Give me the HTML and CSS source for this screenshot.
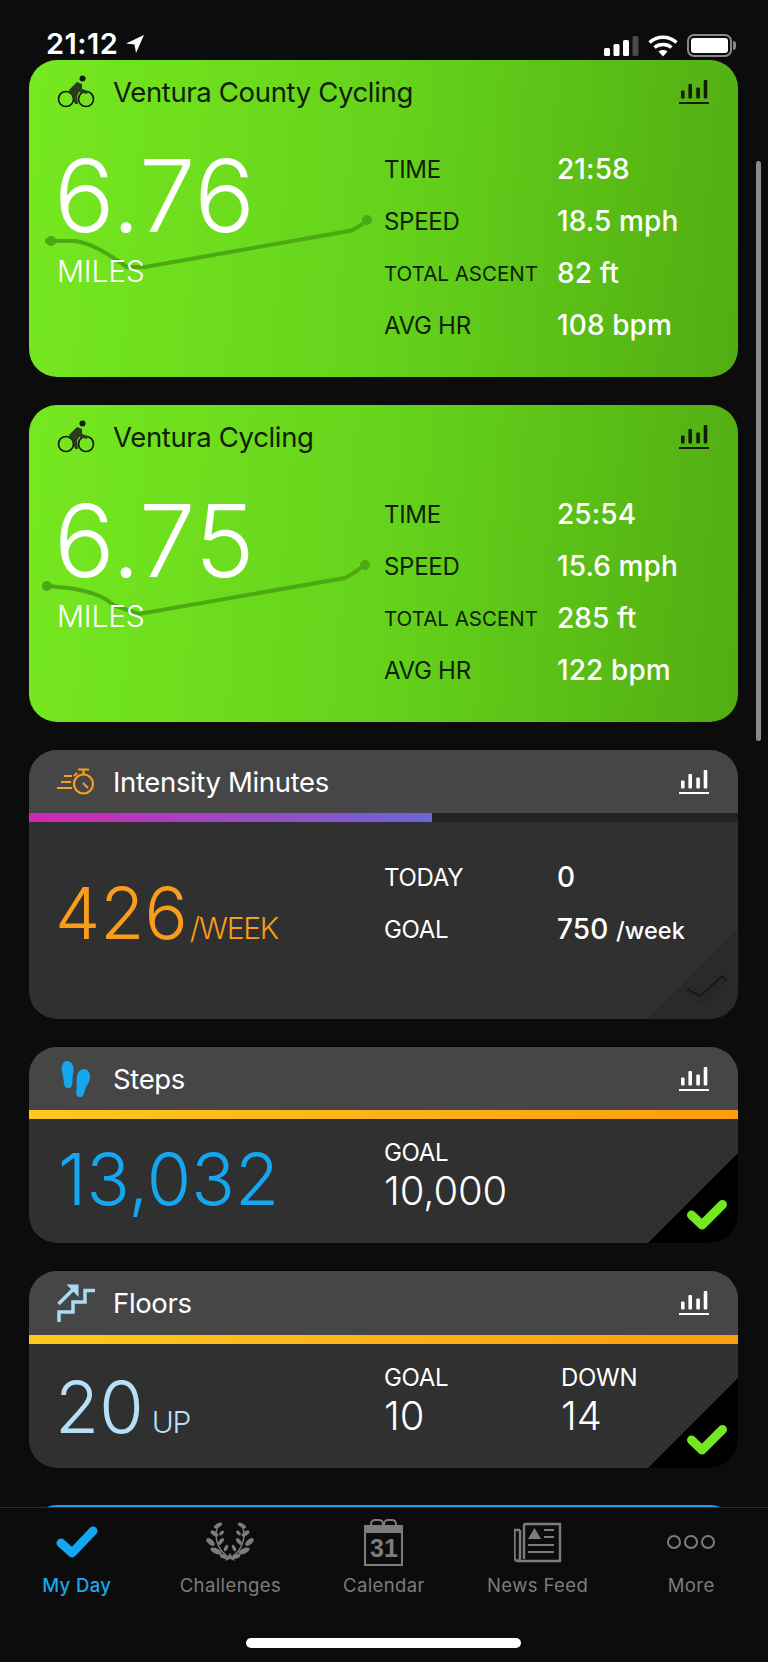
FILE: index.html
```html
<!DOCTYPE html>
<html>
    <head>
        <title>My Day</title>
        <link rel="stylesheet" href="styles.css">
    </head>
    <body>
        <!-- shared icons -->
        <svg class="icon-defs" width="0" height="0">
            <symbol id="icon-bike" viewBox="0 0 38 34">
                <circle cx="9" cy="24" r="7.500" fill="none" stroke="currentColor" stroke-width="1.700"/>
                <circle cx="29" cy="24" r="7.500" fill="none" stroke="currentColor" stroke-width="1.700"/>
                <circle cx="25.500" cy="3.500" r="3" fill="#0e1f05"/>
                <path d="M12 15 L20 7 L25 9 L25 14 L31 16 L30 19 L22 17 L20 21 L21 29 L18 29 L15 20 Z" fill="#2b3a1f"/>
            </symbol>
            <symbol id="icon-chart" viewBox="0 0 30 24">
                <rect x="2" y="10.500" width="3.600" height="8" rx="1"/>
                <rect x="9.400" y="4" width="3.600" height="14.500" rx="1"/>
                <rect x="17.300" y="7.500" width="3.600" height="11" rx="1"/>
                <rect x="24.700" y="0" width="3.600" height="18.500" rx="1"/>
                <rect x="0" y="22" width="30" height="2"/>
            </symbol>
            <symbol id="icon-check" viewBox="0 0 42 32">
                <path d="M5.500 16 L16 26 L36.500 5.500" fill="none" stroke="currentColor" stroke-width="9" stroke-linejoin="round" stroke-linecap="round"/>
            </symbol>
            <symbol id="icon-check-faint" viewBox="0 0 42 32">
                <path d="M5.500 16 L16 26 L36.500 5.500" fill="none" stroke="#272728" stroke-width="9" stroke-linejoin="round" stroke-linecap="round"/>
                <path d="M1 14 L14 21 L36 1 L41 6" fill="none" stroke="#151516" stroke-width="1.600"/>
            </symbol>
            <g id="laurel-half">
                <ellipse cx="12" cy="4.500" rx="4.500" ry="2" transform="rotate(-30 12 4.500)"/>
                <ellipse cx="8.500" cy="12.500" rx="4.500" ry="2.200" transform="rotate(35 8.500 12.500)"/>
                <ellipse cx="15.500" cy="12" rx="3" ry="1.600" transform="rotate(-45 15.500 12)"/>
                <ellipse cx="4.500" cy="21" rx="5" ry="2.600" transform="rotate(40 4.500 21)"/>
                <ellipse cx="15" cy="20.500" rx="4" ry="1.900" transform="rotate(-50 15 20.500)"/>
                <ellipse cx="10" cy="30" rx="6" ry="2.700" transform="rotate(25 10 30)"/>
                <ellipse cx="20" cy="27" rx="3.500" ry="1.700" transform="rotate(-65 20 27)"/>
                <ellipse cx="18" cy="35.500" rx="4.500" ry="2.200" transform="rotate(20 18 35.500)"/>
                <path d="M12 5 C8 14 10 27 21 35" fill="none" stroke="#7c7c7c" stroke-width="1.500"/>
            </g>
        </svg>

        <div class="screen">
            <!-- status bar -->
            <div class="status-bar">
                <div class="status-time">
                    <span>21:12</span>
                    <svg width="20" height="20" viewBox="0 0 20 20"><path d="M19 1 L1 9.500 L9.500 10.500 L11 19 Z" fill="#fff"/></svg>
                </div>
                <div class="status-icons">
                    <svg width="35" height="22" viewBox="0 0 35 22">
                        <rect x="0" y="13" width="6" height="8" rx="1.500" fill="#fff"/>
                        <rect x="9.500" y="9" width="6" height="12" rx="1.500" fill="#fff"/>
                        <rect x="19" y="5" width="6" height="16" rx="1.500" fill="#fff"/>
                        <rect x="28.500" y="1" width="6" height="20" rx="1.500" fill="#4a4a4a"/>
                    </svg>
                    <svg width="30" height="22" viewBox="0 0 30 22">
                        <path d="M1.500 7.500 C9 0.500 21 0.500 28.500 7.500" fill="none" stroke="#fff" stroke-width="3.400"/>
                        <path d="M6.500 12.500 C11 8.500 19 8.500 23.500 12.500" fill="none" stroke="#fff" stroke-width="3.400"/>
                        <path d="M10.500 16.500 C13 14.500 17 14.500 19.500 16.500 L15 21.500 Z" fill="#fff"/>
                    </svg>
                    <div class="battery"><div class="battery-fill"></div></div>
                </div>
            </div>

            <!-- scrolling list of cards -->
            <div class="card-list">
                <div class="card card-green">
                    <svg class="route" width="380" height="100" viewBox="0 0 380 100">
                        <circle cx="22" cy="33" r="5"/>
                        <circle cx="338" cy="12" r="5"/>
                        <path d="M16 33 L46 33 C62 35 78 45 98 59 L116 59 L320 23 C328 21 332 17 338 12"/>
                    </svg>
                    <div class="card-header">
                        <svg class="card-icon bike-icon"><use href="#icon-bike"/></svg>
                        <div class="card-title">Ventura County Cycling</div>
                        <svg class="chart-icon"><use href="#icon-chart"/></svg>
                    </div>
                    <div class="card-body">
                        <div class="hero">
                            <div class="hero-number">6.76</div>
                            <div class="hero-unit">MILES</div>
                        </div>
                        <div class="stats">
                            <div class="stat-label">TIME</div><div class="stat-value">21:58</div>
                            <div class="stat-label">SPEED</div><div class="stat-value">18.5 mph</div>
                            <div class="stat-label small">TOTAL ASCENT</div><div class="stat-value">82 ft</div>
                            <div class="stat-label">AVG HR</div><div class="stat-value">108 bpm</div>
                        </div>
                    </div>
                </div>

                <div class="card card-green">
                    <svg class="route" width="380" height="100" viewBox="0 0 380 100">
                        <circle cx="18" cy="33" r="5"/>
                        <circle cx="336" cy="12" r="5"/>
                        <path d="M18 33 L40 35 C58 38 74 42 84 52 L110 61 L316 25 C324 21 330 16 336 12"/>
                    </svg>
                    <div class="card-header">
                        <svg class="card-icon bike-icon"><use href="#icon-bike"/></svg>
                        <div class="card-title">Ventura Cycling</div>
                        <svg class="chart-icon"><use href="#icon-chart"/></svg>
                    </div>
                    <div class="card-body">
                        <div class="hero">
                            <div class="hero-number">6.75</div>
                            <div class="hero-unit">MILES</div>
                        </div>
                        <div class="stats">
                            <div class="stat-label">TIME</div><div class="stat-value">25:54</div>
                            <div class="stat-label">SPEED</div><div class="stat-value">15.6 mph</div>
                            <div class="stat-label small">TOTAL ASCENT</div><div class="stat-value">285 ft</div>
                            <div class="stat-label">AVG HR</div><div class="stat-value">122 bpm</div>
                        </div>
                    </div>
                </div>

                <div class="card card-dark card-intensity">
                    <div class="card-header">
                        <svg class="card-icon" viewBox="0 0 38 28">
                            <g fill="none" stroke="#f99d1c" stroke-width="2.200">
                                <circle cx="26.500" cy="16" r="9.500"/>
                                <path d="M21 1.500H32M26.500 2V6M26 15L31 20M0 20H15M4 14H14M7 8H15M17 8L20 5"/>
                            </g>
                        </svg>
                        <div class="card-title">Intensity Minutes</div>
                        <svg class="chart-icon"><use href="#icon-chart"/></svg>
                    </div>
                    <div class="progress"><div class="progress-fill purple" style="width: 56.900%"></div></div>
                    <div class="card-body">
                        <div class="big-value orange">426<span class="big-unit">/WEEK</span></div>
                        <div class="stats">
                            <div class="stat-label">TODAY</div><div class="stat-value">0</div>
                            <div class="stat-label">GOAL</div><div class="stat-value">750 <span class="per-week">/week</span></div>
                        </div>
                    </div>
                    <div class="corner faint">
                        <svg class="corner-check"><use href="#icon-check-faint"/></svg>
                    </div>
                </div>

                <div class="card card-dark card-steps">
                    <div class="card-header">
                        <svg class="card-icon" viewBox="0 0 38 38" fill="#14a7f0">
                            <path d="M10 1 C15 1 17 6 16.500 12 C16 16 15 18 15.500 21 C16 26 13 29 10 28 C7 27 7 23 6.500 19 C6 14 4 11 5 7 C5.500 3 7 1 10 1 Z"/>
                            <path d="M27 9 C31 9 33.500 13 33 18 C32.500 23 29 26 28 30 C27 35 25 38 22 37 C19 36 19 33 19.500 29 C20 25 19 21 20 16 C21 11 24 9 27 9 Z"/>
                        </svg>
                        <div class="card-title">Steps</div>
                        <svg class="chart-icon"><use href="#icon-chart"/></svg>
                    </div>
                    <div class="progress"><div class="progress-fill amber" style="width: 100%"></div></div>
                    <div class="card-body">
                        <div class="big-value blue">13,032</div>
                        <div class="goal-block">
                            <div class="goal-label">GOAL</div>
                            <div class="goal-value">10,000</div>
                        </div>
                    </div>
                    <div class="corner">
                        <svg class="corner-check"><use href="#icon-check"/></svg>
                    </div>
                </div>

                <div class="card card-dark card-floors">
                    <div class="card-header">
                        <svg class="card-icon" viewBox="0 0 38 38" fill="none" stroke="#a8dcf5" stroke-width="3.500">
                            <path d="M2 38V28H16V18H28V6.500H38"/>
                            <path d="M1.500 20L17 4.500"/>
                            <path d="M9.500 0.500H21.500V13Z" fill="#a8dcf5" stroke="none"/>
                        </svg>
                        <div class="card-title">Floors</div>
                        <svg class="chart-icon"><use href="#icon-chart"/></svg>
                    </div>
                    <div class="progress"><div class="progress-fill amber" style="width: 100%"></div></div>
                    <div class="card-body">
                        <div class="big-value pale">20<span class="big-unit">UP</span></div>
                        <div class="goal-block">
                            <div class="goal-label">GOAL</div>
                            <div class="goal-value">10</div>
                        </div>
                        <div class="goal-block goal-down">
                            <div class="goal-label">DOWN</div>
                            <div class="goal-value">14</div>
                        </div>
                    </div>
                    <div class="corner">
                        <svg class="corner-check"><use href="#icon-check"/></svg>
                    </div>
                </div>

                <div class="card card-next"></div>
                <div class="scroll-thumb"></div>
            </div>

            <!-- bottom tabs -->
            <div class="tab-bar">
                <div class="tabs">
                    <div class="tab active">
                        <svg width="44" height="36" viewBox="0 0 44 36"><path d="M6 19 L17 29 L38 7" fill="none" stroke="#14a7f0" stroke-width="9" stroke-linejoin="round" stroke-linecap="round"/></svg>
                        <span>My Day</span>
                    </div>
                    <div class="tab">
                        <svg width="48" height="42" viewBox="0 0 48 42" fill="#7c7c7c">
                            <use href="#laurel-half"/>
                            <use href="#laurel-half" transform="matrix(-1 0 0 1 48 0)"/>
                            <path d="M24 32 L29 40 L24 38 L19 40 Z"/>
                        </svg>
                        <span>Challenges</span>
                    </div>
                    <div class="tab">
                        <div class="calendar">
                            <div class="calendar-rings"></div>
                            <div class="calendar-day">31</div>
                        </div>
                        <span>Calendar</span>
                    </div>
                    <div class="tab">
                        <svg width="48" height="42" viewBox="1 0 48 42" fill="none" stroke="#7c7c7c" stroke-width="2.400">
                            <path d="M11 3H47V40H5C2.500 40 1.500 38.500 1.500 36V9H7"/>
                            <path d="M7 9V36C7 38 6 40 5 40M11 3V38"/>
                            <path d="M31 9H41M31 16H41M15 24H41M15 31H41" stroke-width="2"/>
                            <path d="M15 18L21.500 7L28 18Z" fill="#7c7c7c" stroke="none"/>
                        </svg>
                        <span>News Feed</span>
                    </div>
                    <div class="tab">
                        <svg width="48" height="42" viewBox="0 0 48 42" fill="none" stroke="#7c7c7c" stroke-width="2">
                            <circle cx="7" cy="21" r="6"/>
                            <circle cx="24" cy="21" r="6"/>
                            <circle cx="41" cy="21" r="6"/>
                        </svg>
                        <span>More</span>
                    </div>
                </div>
                <div class="home-indicator"></div>
            </div>
        </div>
    </body>
</html>
```
FILE: styles.css
```css
* {
    box-sizing: border-box;
}

body {
    margin: 0;
    background-color: #0c0c0d;
    font-family: Inter, "Liberation Sans", sans-serif;
    color: white;
}

.icon-defs {
    position: absolute;
}

.screen {
    display: flex;
    flex-direction: column;
    width: 768px;
    height: 1662px;
    overflow: hidden;
}

/* status bar */
.status-bar {
    display: flex;
    justify-content: space-between;
    align-items: flex-end;
    height: 60px;
    padding: 0 36px 0 46px;
    position: relative;
    z-index: 2;
}
.status-time {
    display: flex;
    align-items: center;
    gap: 7px;
    font-size: 29px;
    font-weight: 600;
    letter-spacing: 0.500px;
    line-height: 30px;
    margin-bottom: 1px;
}
.status-icons {
    display: flex;
    align-items: center;
    gap: 9px;
    margin-bottom: 3px;
}
.battery {
    width: 45px;
    height: 23px;
    border: 2px solid #8a8a8a;
    border-radius: 7px;
    padding: 2px;
    position: relative;
}
.battery::after {
    content: "";
    position: absolute;
    right: -6px;
    top: 5px;
    width: 3px;
    height: 9px;
    border-radius: 0 3px 3px 0;
    background-color: #8a8a8a;
}
.battery-fill {
    height: 100%;
    background-color: white;
    border-radius: 3px;
}

/* cards */
.card-list {
    flex: 1;
    min-height: 0;
    padding: 0 30px 0 29px;
    position: relative;
    overflow: hidden;
    display: flex;
    flex-direction: column;
    gap: 28px;
}
.card {
    position: relative;
    flex: none;
    border-radius: 28px;
    overflow: hidden;
}
.card-green {
    height: 317px;
    background: linear-gradient(95deg, #76e820 0%, #65d31b 50%, #52ad12 100%);
    color: #0e1f05;
}
.card-dark {
    background-color: #303031;
}
.card-intensity {
    height: 269px;
}
.card-steps {
    height: 196px;
}
.card-floors {
    height: 197px;
}
.card-floors .card-header {
    height: 64px;
}
.card-next {
    height: 60px;
    margin-top: 9px;
    background-color: #1fa0e6;
}

.card-header {
    display: flex;
    align-items: center;
    height: 63px;
    padding: 0 29px 0 28px;
    position: relative;
}
.card-dark .card-header {
    background-color: #464647;
}
.card-icon {
    width: 38px;
    height: 38px;
    flex: none;
}
.bike-icon {
    height: 34px;
}
.card-title {
    flex: 1;
    margin-left: 18px;
    font-size: 27.500px;
    letter-spacing: -0.350px;
}
.chart-icon {
    width: 30px;
    height: 24px;
    flex: none;
    fill: currentColor;
}

.card-body {
    display: flex;
    position: relative;
    padding-left: 30px;
}

/* green workout cards */
.route {
    position: absolute;
    left: 0;
    top: 148px;
    overflow: visible;
}
.route path {
    fill: none;
    stroke: #4ca813;
    stroke-width: 4;
}
.route circle {
    fill: #4ca813;
}
.hero {
    width: 325px;
    flex: none;
    padding-top: 20px;
    position: relative;
}
.hero-number {
    font-size: 101px;
    font-weight: 300;
    line-height: 104px;
    letter-spacing: 0.300px;
    margin-left: -5px;
    color: white;
}
.hero-unit {
    font-size: 30px;
    font-weight: 300;
    line-height: 34px;
    letter-spacing: -0.200px;
    margin-left: -2px;
    margin-top: 7px;
    color: white;
}
.stats {
    display: grid;
    grid-template-columns: 173px auto;
    grid-auto-rows: 52px;
    align-items: center;
    padding-top: 20px;
}
.stat-label {
    font-size: 24px;
    letter-spacing: -0.300px;
}
.stat-label.small {
    font-size: 20.500px;
    letter-spacing: 0;
}
.stat-value {
    font-size: 28px;
    font-weight: 500;
    letter-spacing: 0.100px;
    color: white;
}
.per-week {
    font-size: 23.500px;
}

/* progress strip */
.progress {
    height: 9px;
    background-color: #232324;
}
.progress-fill {
    height: 100%;
}
.purple {
    background: linear-gradient(90deg, #d326b4, #6b66d8);
}
.amber {
    background: linear-gradient(90deg, #fdc91f, #fd9c10);
}

/* dark stat cards */
.big-value {
    width: 325px;
    flex: none;
    font-size: 72px;
    font-weight: 300;
    line-height: 90px;
    letter-spacing: 0;
    text-indent: -4px;
    white-space: nowrap;
}
.big-unit {
    font-size: 30px;
    font-weight: 300;
    letter-spacing: -1.300px;
}
.orange {
    color: #f99d1c;
}
.blue {
    color: #14a7f0;
}
.pale {
    color: #b5e0f7;
}
.card-intensity .big-value {
    padding-top: 46px;
}
.card-intensity .big-unit {
    margin-left: 2px;
}
.card-intensity .stats {
    padding-top: 29px;
}
.card-steps .big-value {
    padding-top: 15px;
    text-indent: -1px;
}
.card-floors .big-value {
    padding-top: 18px;
}
.card-floors .big-unit {
    margin-left: 8px;
}
.goal-block {
    padding-top: 19px;
    width: 178px;
}
.goal-label {
    font-size: 24px;
    line-height: 30px;
    letter-spacing: -0.300px;
}
.goal-value {
    font-size: 40px;
    font-weight: 300;
    line-height: 46px;
    letter-spacing: -0.100px;
}

/* goal reached corner */
.corner {
    position: absolute;
    right: 0;
    bottom: 0;
    width: 90px;
    height: 90px;
    background-color: black;
    clip-path: polygon(100% 0, 100% 100%, 0 100%);
    color: #72e722;
}
.corner.faint {
    background-color: #2a2a2b;
}
.corner-check {
    position: absolute;
    right: 10px;
    bottom: 12px;
    width: 42px;
    height: 32px;
}

.scroll-thumb {
    position: absolute;
    right: 7px;
    top: 101px;
    width: 5px;
    height: 580px;
    border-radius: 3px;
    background-color: #8a8a8a;
}

/* tab bar */
.tab-bar {
    flex: none;
    height: 155px;
    border-top: 1px solid #2e2e2e;
    background-color: #0c0c0d;
    position: relative;
}
.tabs {
    display: flex;
    padding-top: 12px;
}
.tab {
    flex: 1;
    display: flex;
    flex-direction: column;
    align-items: center;
    height: 80px;
    font-size: 18.500px;
    letter-spacing: 0.400px;
    color: #7c7c7c;
}
.tab svg {
    height: 44px;
    margin-bottom: 10px;
}
.tab.active {
    color: #1ba6ee;
    font-weight: 500;
}
.calendar {
    width: 39px;
    height: 41px;
    margin-top: 5px;
    margin-bottom: 8px;
    position: relative;
    border: 2.500px solid #7c7c7c;
    border-top: 8px solid #7c7c7c;
    text-align: center;
}
/* the two binder loops above the calendar page */
.calendar-rings::before,
.calendar-rings::after {
    content: "";
    position: absolute;
    top: -14px;
    width: 10px;
    height: 10px;
    border: 2.500px solid #7c7c7c;
    border-bottom: 0;
    border-radius: 5px 5px 0 0;
}
.calendar-rings::before {
    left: 4px;
}
.calendar-rings::after {
    right: 4px;
}
.calendar-day {
    font-size: 25px;
    font-weight: 700;
    line-height: 30px;
    letter-spacing: 0;
    color: #7c7c7c;
    font-family: "Liberation Sans", sans-serif;
}
.home-indicator {
    position: absolute;
    left: 246px;
    top: 130px;
    width: 275px;
    height: 10px;
    border-radius: 5px;
    background-color: white;
}
```
